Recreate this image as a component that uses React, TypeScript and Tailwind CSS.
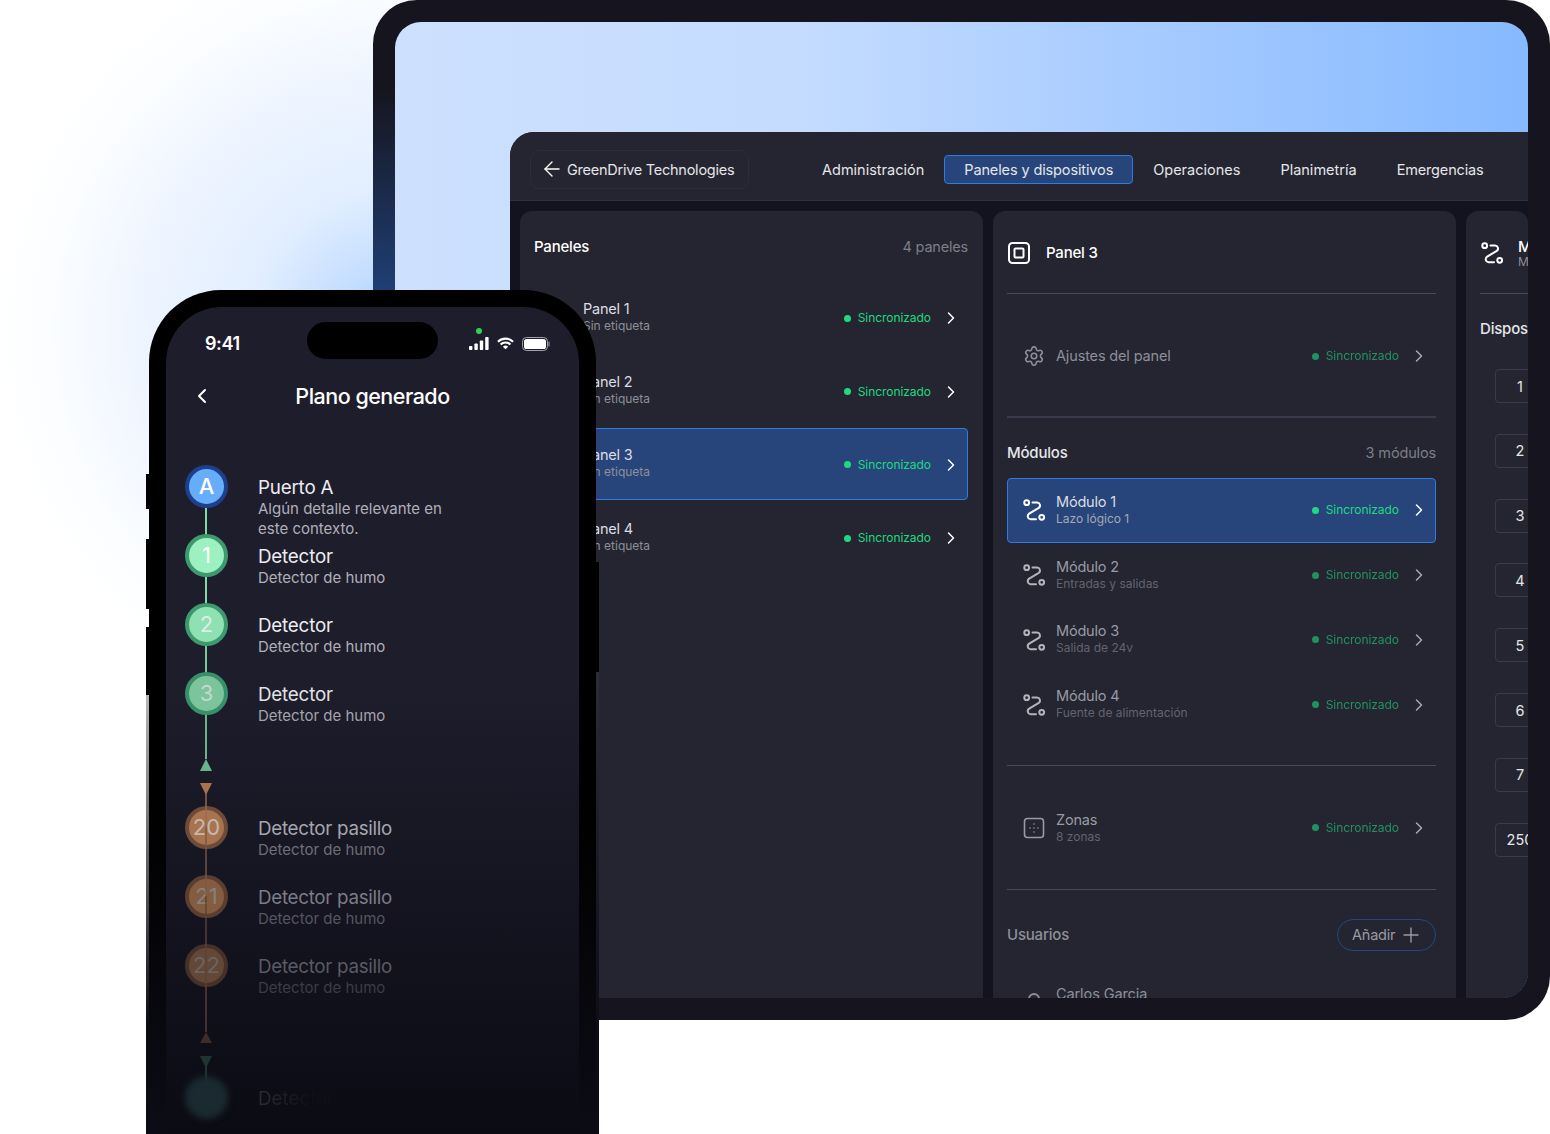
import { ArrowLeft, ChevronLeft, ChevronRight, Plus, Settings } from 'lucide-react';

const fontClass = "font-['Inter',sans-serif]";

function RouteIcon({ className }: { className?: string }) {
  return (
    <svg viewBox="0 0 24 24" fill="none" stroke="currentColor" strokeWidth="2" strokeLinecap="round" strokeLinejoin="round" className={className}>
      <circle cx="4.7" cy="4.7" r="2.4" />
      <circle cx="19.7" cy="19.3" r="2.4" />
      <path d="M10.5 4.5h4.5a3 3 0 0 1 1.8 5.4L7.2 15.6A3.1 3.1 0 0 0 8.6 21.3H14" />
    </svg>
  );
}

function ZonesIcon({ className }: { className?: string }) {
  return (
    <svg viewBox="0 0 24 24" fill="none" stroke="currentColor" strokeWidth="1.6" className={className}>
      <rect x="2.5" y="2.5" width="19" height="19" rx="3" />
      <path d="M12 8v.01M8 12v.01M12 12v.01M16 12v.01M12 16v.01" strokeLinecap="round" />
    </svg>
  );
}

function Status({ dim }: { dim?: boolean }) {
  return (
    <div className={`flex items-center ${dim ? 'opacity-60' : ''}`}>
      <span className="w-[7px] h-[7px] rounded-full bg-[#1fd982]" />
      <span className="ml-[7px] text-[12px] tracking-[-0.05px] text-[#1fd982]">Sincronizado</span>
      <ChevronRight className="ml-[10px] w-[20px] h-[20px] text-white" strokeWidth={1.8} />
    </div>
  );
}

const panels = [
  { name: 'Panel 1', tag: 'Sin etiqueta' },
  { name: 'Panel 2', tag: 'Sin etiqueta' },
  { name: 'Panel 3', tag: 'Sin etiqueta', active: true },
  { name: 'Panel 4', tag: 'Sin etiqueta' },
];

const modules = [
  { name: 'Módulo 1', tag: 'Lazo lógico 1', active: true },
  { name: 'Módulo 2', tag: 'Entradas y salidas' },
  { name: 'Módulo 3', tag: 'Salida de 24v' },
  { name: 'Módulo 4', tag: 'Fuente de alimentación' },
];

const devices = ['1', '2', '3', '4', '5', '6', '7', '250'];

const tabs = ['Administración', 'Paneles y dispositivos', 'Operaciones', 'Planimetría', 'Emergencias'];

function Tablet() {
  return (
    <div className="absolute left-[373px] top-0 w-[1177px] h-[1020px] rounded-[44px] p-[22px] bg-[radial-gradient(circle_at_10px_300px,#204178_0,#16151f_210px)]">
      <div className="relative w-full h-full rounded-[26px] overflow-hidden bg-[linear-gradient(90deg,#cde0fe_0%,#c5dcff_35%,#86b9ff_100%)]">
        <div className="absolute left-[115px] top-[110px] w-[1018px] h-[866px] rounded-tl-[24px] bg-[#13131f] overflow-hidden flex flex-col">
          <header className="h-[69px] shrink-0 bg-[#242530] border-b border-[#2f303e] flex items-center pl-[20px] pt-[6px]">
            <div className="w-[219px] h-[39px] rounded-[9px] border border-[#2c2d3a] flex items-center pl-[9px] gap-[3px] text-white">
              <ArrowLeft className="w-[24px] h-[24px]" strokeWidth={1.4} />
              <span className="pt-[1px] text-[14.5px] text-[#e6e6ea] tracking-[-0.25px] whitespace-nowrap">GreenDrive Technologies</span>
            </div>
            <nav className="ml-[53px] flex items-center">
              {tabs.map((t, i) => (
                <span
                  key={t}
                  className={`h-[29px] px-[19px] pt-[1px] flex items-center rounded-[4px] border text-[14.5px] text-[#e6e6ea] whitespace-nowrap ${i === 1 ? 'tracking-[-0.12px] border-[#2f7be6] bg-[#27457a]' : 'border-transparent'} ${i === 4 ? 'tracking-[-0.15px]' : ''}`}
                >
                  {t}
                </span>
              ))}
            </nav>
          </header>
          <div className="flex-1 min-h-0 flex gap-[10px] pl-[10px] pt-[10px]">
            <section className="w-[463px] shrink-0 bg-[#242530] rounded-t-[12px] pl-[14px] pr-[15px]">
              <div className="h-[70px] pt-[2px] flex items-center justify-between">
                <span className="text-[15px] font-medium text-white tracking-[-0.2px]">Paneles</span>
                <span className="text-[14.5px] text-[#7d7e88] tracking-[-0.2px]">4 paneles</span>
              </div>
              <div className="flex flex-col gap-[1px]">
                {panels.map((p) => (
                  <div
                    key={p.name}
                    className={`h-[72.4px] flex items-center pl-[48px] pr-[6px] justify-between rounded-[4px] border ${p.active ? 'bg-[#27457a] border-[#2f7be6]' : 'border-transparent'}`}
                  >
                    <div className="pb-[2px]">
                      <div className="text-[14.5px] leading-[18px] text-[#dcdce2] tracking-[-0.2px]">{p.name}</div>
                      <div className="text-[12px] leading-[15px] text-[#8e8f99]">{p.tag}</div>
                    </div>
                    <div className="pt-[2px]">
                      <Status />
                    </div>
                  </div>
                ))}
              </div>
            </section>
            <section className="w-[463px] shrink-0 bg-[#242530] rounded-t-[12px] pl-[14px] pr-[20px] overflow-hidden">
              <div className="h-[83px] flex items-center border-b border-[#4a4a5e] pt-[2px] gap-[15px] text-white">
                <svg viewBox="0 0 24 24" fill="none" stroke="currentColor" strokeWidth="2" className="w-[24px] h-[24px]">
                  <rect x="2" y="2" width="20" height="20" rx="3.5" />
                  <rect x="7.5" y="7.5" width="9" height="9" rx="1" />
                </svg>
                <span className="text-[15px] font-medium tracking-[-0.2px]">Panel 3</span>
              </div>
              <div className="h-[124px] pt-[2px] flex items-center justify-between pl-[16px] pr-[7px] border-b-2 border-[#3a3a4c]">
                <div className="flex items-center gap-[11px] text-[#8e8f99]">
                  <Settings className="w-[22px] h-[22px]" strokeWidth={1.7} />
                  <span className="text-[14.5px] tracking-[-0.15px]">Ajustes del panel</span>
                </div>
                <Status dim />
              </div>
              <div className="h-[60px] pt-[10px] flex items-center justify-between">
                <span className="text-[15px] font-medium text-[#e6e6ea] tracking-[-0.2px]">Módulos</span>
                <span className="text-[14.5px] text-[#7d7e88] tracking-[-0.15px]">3 módulos</span>
              </div>
              <div className="flex flex-col h-[288px] border-b border-[#4a4a5e]">
                {modules.map((m) => (
                  <div
                    key={m.name}
                    className={`h-[64.8px] shrink-0 flex items-center justify-between pl-[14px] pr-[6px] rounded-[4px] border ${m.active ? 'bg-[#27457a] border-[#2f7be6]' : 'border-transparent'}`}
                  >
                    <div className={`flex items-center gap-[10px] ${m.active ? 'text-white' : 'text-[#b4b4bc]'}`}>
                      <RouteIcon className="w-[24px] h-[24px]" />
                      <div className="pb-[2px]">
                        <div className={`text-[14.5px] leading-[18px] tracking-[-0.2px] ${m.active ? 'text-[#dcdce2]' : 'text-[#9a9aa4]'}`}>{m.name}</div>
                        <div className={`text-[12px] leading-[15px] ${m.active ? 'text-[#a3a8b8]' : 'text-[#62636f]'}`}>{m.tag}</div>
                      </div>
                    </div>
                    <Status dim={!m.active} />
                  </div>
                ))}
              </div>
              <div className="h-[124px] flex items-center justify-between pl-[15px] pr-[7px] border-b border-[#4a4a5e]">
                <div className="flex items-center gap-[10px] text-[#9a9aa4]">
                  <ZonesIcon className="w-[24px] h-[24px]" />
                  <div>
                    <div className="text-[14.5px] leading-[18px] tracking-[-0.2px]">Zonas</div>
                    <div className="text-[12px] leading-[15px] text-[#62636f]">8 zonas</div>
                  </div>
                </div>
                <Status dim />
              </div>
              <div className="h-[90px] flex items-center justify-between">
                <span className="text-[15px] font-medium text-[#8e8f99] tracking-[-0.2px]">Usuarios</span>
                <div className="w-[99px] h-[32px] rounded-full border border-[#24477f] flex items-center pl-[14px] gap-[4px] text-[#9a9aa4]">
                  <span className="text-[14.5px] tracking-[-0.2px]">Añadir</span>
                  <Plus className="w-[24px] h-[24px]" strokeWidth={1.4} />
                </div>
              </div>
              <div className="flex items-start gap-[11px] pl-[16px] text-[#8e8f99]">
                <span className="w-[22px] flex justify-center pt-[13px]">
                  <span className="w-[12px] h-[12px] rounded-full border-2 border-[#8e8f99]" />
                </span>
                <span className="text-[14.5px] leading-[28px] tracking-[-0.1px]">Carlos Garcia</span>
              </div>
            </section>
            <section className="flex-1 min-w-0 bg-[#242530] rounded-t-[12px] pl-[14px] overflow-hidden">
              <div className="h-[83px] flex items-center border-b border-[#4a4a5e] pt-[2px] gap-[14px] text-white">
                <RouteIcon className="w-[24px] h-[24px] shrink-0" />
                <div>
                  <div className="text-[15px] leading-[17px] font-medium">Módulo</div>
                  <div className="text-[12px] leading-[14px] text-[#8e8f99]">Módulo</div>
                </div>
              </div>
              <div className="h-[70px] flex items-center text-[15px] font-medium text-[#e6e6ea] whitespace-nowrap tracking-[-0.2px]">Dispositivos</div>
              <div className="flex flex-col gap-[30.8px] pl-[15px] pt-[5px]">
                {devices.map((d) => (
                  <div key={d} className="w-[50px] h-[34px] shrink-0 pt-[1px] rounded-[4px] border border-[#3a3a4c] flex items-center justify-center text-[14.5px] text-[#e6e6ea]">
                    {d}
                  </div>
                ))}
              </div>
            </section>
          </div>
        </div>
      </div>
    </div>
  );
}

const nodes = [
  { key: 'A', title: 'Puerto A', sub: ['Algún detalle relevante en', 'este contexto.'], ring: 'border-[#1e3f8c]', fill: 'bg-[#66adfb]', num: 'text-white', t: 'text-[#ececf0]', s: 'text-[#b0b0b8]', h: 'h-[69px]', line: 'bg-[#7fdca6]' },
  { key: '1', title: 'Detector', sub: ['Detector de humo'], ring: 'border-[#3e9a6e]', fill: 'bg-[#9df0c0]', num: 'text-white', t: 'text-[#ececf0]', s: 'text-[#b0b0b8]', h: 'h-[69px]', line: 'bg-[#7fdca6]' },
  { key: '2', title: 'Detector', sub: ['Detector de humo'], ring: 'border-[#3e9a6e]', fill: 'bg-[#8fe0b2]', num: 'text-[#dcefe4]', t: 'text-[#ececf0]', s: 'text-[#b0b0b8]', h: 'h-[69px]', line: 'bg-[#76c99a]' },
  { key: '3', title: 'Detector', sub: ['Detector de humo'], ring: 'border-[#379069]', fill: 'bg-[#7cc49c]', num: 'text-[#c5d8cc]', t: 'text-[#e2e2e6]', s: 'text-[#a4a4ac]', h: 'h-[134px]', line: 'bg-[#68b48a]' },
];

const hallNodes = [
  { key: '20', ring: 'border-[#6e4a38]', fill: 'bg-[#a87450]', num: 'text-[#c4b8b0]', t: 'text-[#a6a6ae]', s: 'text-[#6e6e78]', line: 'bg-[#9a6b4e]/70' },
  { key: '21', ring: 'border-[#5a3e30]', fill: 'bg-[#835c42]', num: 'text-[#87807c]', t: 'text-[#7c7c86]', s: 'text-[#565660]', line: 'bg-[#7b5843]/70' },
  { key: '22', ring: 'border-[#46312a]', fill: 'bg-[#644837]', num: 'text-[#6a6360]', t: 'text-[#5a5a64]', s: 'text-[#3c3c48]', line: 'bg-[#5c4233]/70' },
];

function Phone() {
  return (
    <div className="absolute left-[146px] top-[290px] w-[453px] h-[844px]">
      <div className="absolute left-0 top-[184px] w-[4px] h-[35px] bg-black" />
      <div className="absolute left-0 top-[249px] w-[4px] h-[70px] bg-black" />
      <div className="absolute left-0 top-[337px] w-[4px] h-[70px] bg-black" />
      <div className="absolute left-0 top-[405px] bottom-0 w-[4px] bg-[linear-gradient(180deg,#b5b5b5,#0c0c16_75%)]" />
      <div className="absolute right-0 top-[272px] w-[4px] h-[110px] bg-black" />
      <div className="absolute right-0 top-[382px] bottom-0 w-[4px] bg-[linear-gradient(180deg,#2c2c36,#0c0c16_80%)]" />
      <div className="absolute inset-x-[3px] top-0 bottom-0 rounded-t-[72px] bg-[linear-gradient(180deg,#000_0%,#000_60%,#0c0c16_100%)] overflow-hidden p-[17px] pb-0">
        <div className="relative h-full rounded-t-[56px] bg-[linear-gradient(180deg,#1e1d2c_0%,#1e1d2c_45%,#0b0b14_100%)] overflow-hidden text-white">
          <div className="h-[70px] flex items-center justify-between pl-[39px] pr-[29px] pt-[3px]">
            <span className="text-[18px] font-semibold tracking-[-0.4px]">9:41</span>
            <div className="relative flex items-center gap-[8px]">
              <span className="absolute left-[7px] -top-[9px] w-[6px] h-[6px] rounded-full bg-[#30d158]" />
              <svg width="20" height="13" viewBox="0 0 20 13" fill="white">
                <rect x="0" y="9" width="3.4" height="4" rx="0.8" />
                <rect x="5.4" y="6.4" width="3.4" height="6.6" rx="0.8" />
                <rect x="10.8" y="3.4" width="3.4" height="9.6" rx="0.8" />
                <rect x="16.2" y="0" width="3.4" height="13" rx="0.8" />
              </svg>
              <svg width="17" height="13" viewBox="0 0 18 13" fill="none" stroke="white" strokeWidth="2.3">
                <path d="M1 4.6a11.4 11.4 0 0 1 16 0" />
                <path d="M3.8 7.6a7.4 7.4 0 0 1 10.4 0" />
                <path d="M9 12.6 6.2 9.9a4 4 0 0 1 5.6 0z" fill="white" stroke="none" />
              </svg>
              <svg width="28" height="14" viewBox="0 0 28 14" fill="none">
                <rect x="0.5" y="0.5" width="25" height="13" rx="4" stroke="#a0a0a8" />
                <rect x="2" y="2" width="22" height="10" rx="2.6" fill="white" />
                <path d="M27 5v4" stroke="#a0a0a8" strokeLinecap="round" />
              </svg>
            </div>
          </div>
          <div className="absolute left-[141px] top-[15px] w-[131px] h-[37px] rounded-full bg-black" />
          <div className="h-[40px] mt-[-1px] relative flex items-center justify-center">
            <ChevronLeft className="absolute left-[24px] w-[24px] h-[24px]" strokeWidth={2} />
            <span className="text-[21.5px] font-medium tracking-[-0.5px]">Plano generado</span>
          </div>
          <div className="pl-[19px] pt-[49px]">
            {nodes.map((n) => (
              <div key={n.key} className={`relative ${n.h} flex`}>
                <div className={`absolute left-[20px] top-[21px] w-[2px] ${n.key === '3' ? 'h-[66px]' : 'h-[69px]'} ${n.line}`} />
                {n.key === '3' && (
                  <div className="absolute left-[15px] top-[87px] w-0 h-0 border-x-[6px] border-x-transparent border-b-[12px] border-b-[#68b48a]" />
                )}
                <div className={`relative w-[43px] h-[43px] shrink-0 rounded-full border-[4px] ${n.ring} ${n.fill} ${n.num} flex items-center justify-center text-[22px] ${n.key === 'A' ? 'font-medium' : ''}`}>{n.key}</div>
                <div className="ml-[30px] pt-[12px]">
                  <div className={`text-[18.8px] leading-[22px] tracking-[-0.2px] ${n.t}`}>{n.title}</div>
                  {n.sub.map((s) => (
                    <div key={s} className={`text-[15px] leading-[20px] ${n.s}`}>{s}</div>
                  ))}
                </div>
              </div>
            ))}
            {hallNodes.map((n, i) => (
              <div key={n.key} className="relative h-[69px] flex">
                {i === 0 && (
                  <div className="absolute left-[15px] -top-[23px] w-0 h-0 border-x-[6px] border-x-transparent border-t-[12px] border-t-[#a87450]" />
                )}
                <div className={`relative w-[43px] h-[43px] shrink-0 rounded-full border-[4px] ${n.ring} ${n.fill} ${n.num} flex items-center justify-center text-[22px]`}>{n.key}</div>
                <div className={`absolute left-[20px] w-[2px] ${i === 0 ? '-top-[13px] h-[34px]' : '-top-[48px] h-[69px]'} ${n.line}`} />
                {i === 2 && (
                  <>
                    <div className={`absolute left-[20px] top-[21px] w-[2px] h-[67px] ${n.line}`} />
                    <div className="absolute left-[15px] top-[88px] w-0 h-0 border-x-[6px] border-x-transparent border-b-[11px] border-b-[#3d2d28]" />
                  </>
                )}
                <div className="ml-[30px] pt-[12px]">
                  <div className={`text-[18.8px] leading-[22px] tracking-[-0.3px] ${n.t}`}>Detector pasillo</div>
                  <div className={`text-[15px] leading-[20px] ${n.s}`}>Detector de humo</div>
                </div>
              </div>
            ))}
            <div className="relative h-[69px] mt-[63px] flex">
              <div className="absolute left-[15px] -top-[20px] w-0 h-0 border-x-[6px] border-x-transparent border-t-[12px] border-t-[#1f3530]" />
              <div className="absolute left-[20px] -top-[10px] w-[2px] h-[30px] bg-[#1f3530]" />
              <div className="relative w-[43px] h-[43px] rounded-full bg-[#1a2a30] blur-[3px]" />
              <div className="ml-[30px] mt-[12px] h-[24px] text-[18.8px] leading-[22px] text-transparent bg-clip-text bg-[linear-gradient(90deg,#2c2c38,#0f0f19_70%)] blur-[0.6px]">Detector</div>
            </div>
          </div>
        </div>
      </div>
    </div>
  );
}

export default function App() {
  return (
    <div className={`relative w-[1550px] h-[1134px] overflow-hidden bg-white ${fontClass}`}>
      <div className="absolute left-[-10px] top-[-70px] w-[800px] h-[800px] bg-[radial-gradient(circle_closest-side,#a5ceff_0%,#c4deff_15%,#e2eeff_35%,#edf4ff_60%,#fbfdff_85%,#ffffff_100%)]" />
      <Tablet />
      <Phone />
    </div>
  );
}
